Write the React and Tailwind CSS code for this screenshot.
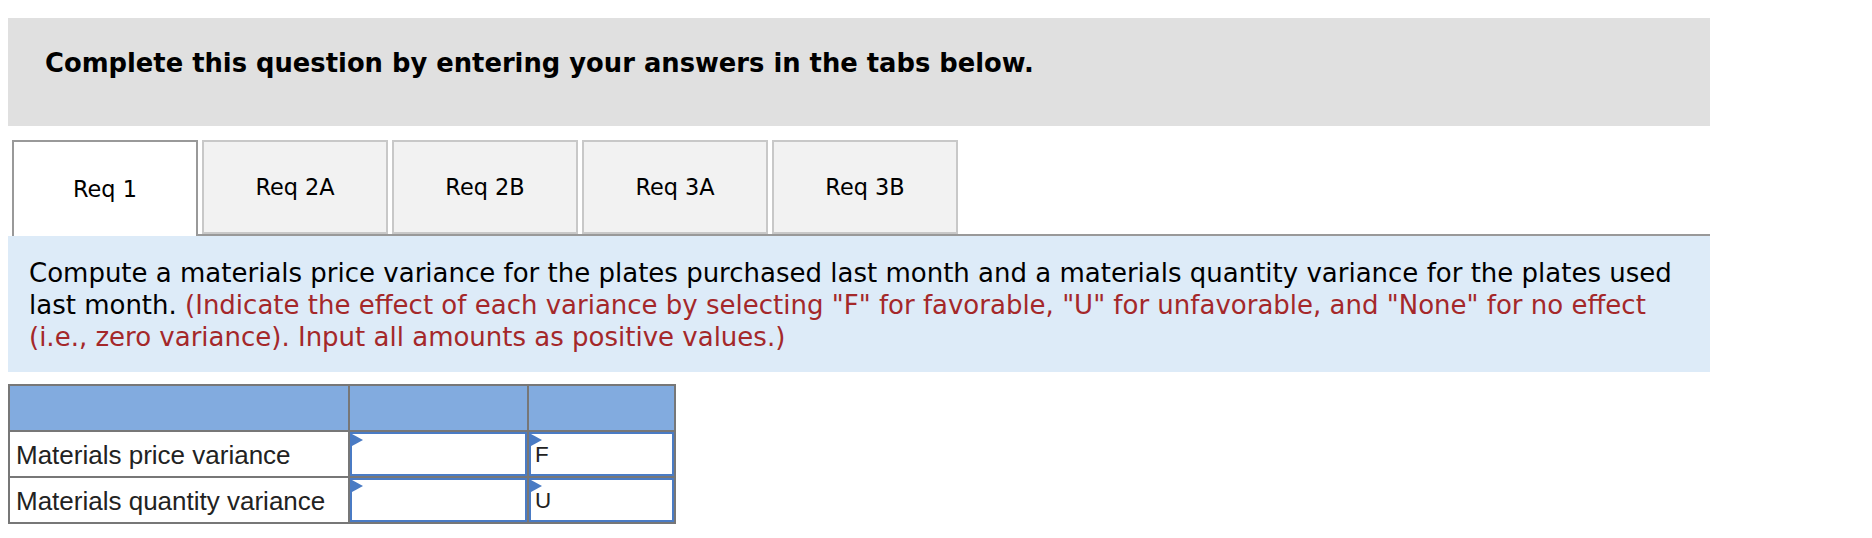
import React from "react";

const tabs = ["Req 1", "Req 2A", "Req 2B", "Req 3A", "Req 3B"];

const rows = [
  { label: "Materials price variance", effect: "F" },
  { label: "Materials quantity variance", effect: "U" },
];

function InputCell({ value }) {
  return (
    <div className="relative h-full w-full border-2 border-[#4a7bc4] bg-white flex items-center pl-[4px]">
      <span className="absolute left-0 top-0 w-0 h-0 border-t-[6px] border-b-[6px] border-l-[11px] border-t-transparent border-b-transparent border-l-[#4a7bc4]" />
      <span className="text-[22.4px] leading-none text-[#222] font-['Liberation_Sans',Arial,sans-serif] pt-[2px]">
        {value}
      </span>
    </div>
  );
}

export default function App() {
  return (
    <div className="w-[1872px] h-[538px] bg-white font-['DejaVu_Sans',Verdana,sans-serif] text-black">
      {/* instructions header */}
      <div className="ml-[8px] mt-[18px] w-[1702px] h-[108px] bg-[#e0e0e0] pl-[37px] pt-[29px]">
        <p className="text-[25.8px] leading-[32px] font-bold">
          Complete this question by entering your answers in the tabs below.
        </p>
      </div>

      {/* tabs */}
      <div className="ml-[8px] mt-[14px] w-[1702px] flex">
        <div className="ml-[4px] w-[186px] h-[96px] border-2 border-b-0 border-[#999] bg-white flex items-center justify-center pt-[1px]">
          <span className="text-[22.4px] leading-none">{tabs[0]}</span>
        </div>
        <div className="flex-1 flex items-start gap-[4px] pl-[4px] border-b-2 border-[#999]">
          {tabs.slice(1).map((t) => (
            <div
              key={t}
              className="w-[186px] h-[94px] border-2 border-[#c8c8c8] bg-[#f2f2f2] flex items-center justify-center pt-[1px]"
            >
              <span className="text-[22.4px] leading-none">{t}</span>
            </div>
          ))}
        </div>
      </div>

      {/* question text */}
      <div className="ml-[8px] w-[1702px] h-[136px] bg-[#ddebf8] pl-[21px] pt-[21px]">
        <p className="text-[26px] leading-[32px] whitespace-nowrap">
          Compute a materials price variance for the plates purchased last month and a materials quantity variance for the plates used
          <br />
          last month.{" "}
          <span className="text-[#a4282a]">
            (Indicate the effect of each variance by selecting "F" for favorable, "U" for unfavorable, and "None" for no effect
            <br />
            (i.e., zero variance). Input all amounts as positive values.)
          </span>
        </p>
      </div>

      {/* answer table */}
      <div className="ml-[8px] mt-[12px] w-[668px] border-2 border-[#777] bg-[#777] grid grid-cols-[338px_177px_145px] gap-[2px] font-['Liberation_Sans',Arial,sans-serif]">
        <div className="h-[44px] bg-[#82abdf]" />
        <div className="h-[44px] bg-[#82abdf]" />
        <div className="h-[44px] bg-[#82abdf]" />
        {rows.map((r) => (
          <React.Fragment key={r.label}>
            <div className="h-[44px] bg-white flex items-center pl-[6px] text-[26px] leading-none text-[#222] pt-[2px]">
              {r.label}
            </div>
            <div className="h-[44px] bg-white">
              <InputCell value="" />
            </div>
            <div className="h-[44px] bg-white">
              <InputCell value={r.effect} />
            </div>
          </React.Fragment>
        ))}
      </div>
    </div>
  );
}
